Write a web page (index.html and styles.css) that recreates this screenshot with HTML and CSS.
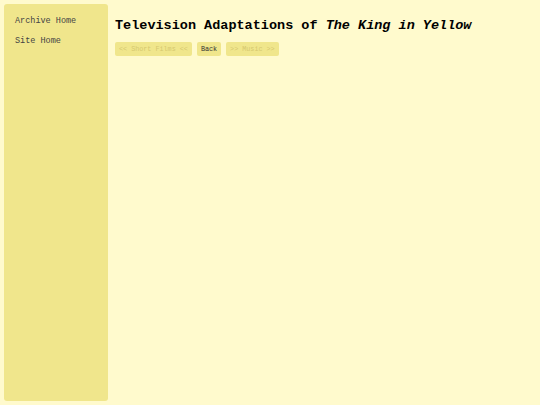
FILE: index.html
```html
<!DOCTYPE html>
<html>
<head>
<meta charset="utf-8">
<link rel="stylesheet" href="styles.css">
</head>
<body>
<div class="layout">
  <nav class="sidebar">
    <a class="nav-link" href="#">Archive Home</a>
    <a class="nav-link" href="#">Site Home</a>
  </nav>
  <main class="main">
    <h1 class="title">Television Adaptations of <em>The King in Yellow</em></h1>
    <div class="buttons">
      <span class="btn disabled">&lt;&lt; Short Films &lt;&lt;</span>
      <span class="btn">Back</span>
      <span class="btn disabled">&gt;&gt; Music &gt;&gt;</span>
    </div>
  </main>
</div>
</body>
</html>
```
FILE: styles.css
```css
html, body {
  margin: 0;
  padding: 0;
  background: #fffacd;
  font-family: "Liberation Mono", "Courier New", monospace;
}
.layout {
  display: flex;
  padding: 4px;
  gap: 7px;
  height: 405px;
  box-sizing: border-box;
}
.sidebar {
  width: 104px;
  height: 397px;
  background: #f0e68c;
  border-radius: 3px;
  box-sizing: border-box;
  padding: 11px 0 0 11px;
  display: flex;
  flex-direction: column;
  gap: 8px;
}
.nav-link {
  font-size: 8.5px;
  line-height: 12px;
  color: #444;
  text-decoration: none;
}
.main {
  flex: 1;
  padding-top: 14px;
}
.title {
  margin: 0;
  font-size: 13.5px;
  line-height: 16px;
  font-weight: bold;
  color: #000;
}
.title em {
  font-style: italic;
}
.buttons {
  display: flex;
  gap: 5px;
  margin-top: 8px;
}
.btn {
  background: #f0e68c;
  font-size: 6.75px;
  line-height: 14px;
  padding: 0 4px;
  border-radius: 2px;
  color: #333;
}
.btn.disabled {
  color: #d6c870;
}
```
